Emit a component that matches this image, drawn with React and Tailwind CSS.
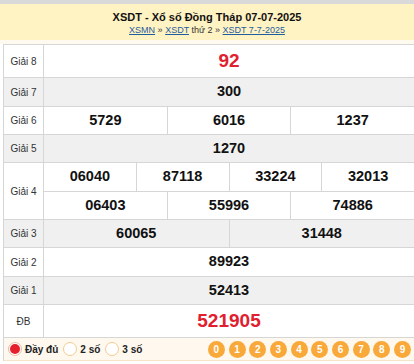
import React from 'react';

const rows = [
  { label: 'Giải 8', lines: [['92']], h: ['h-[33px]'], red: true, bg: 'bg-white' },
  { label: 'Giải 7', lines: [['300']], h: ['h-[29px]'], bg: 'bg-[#f0f0f0]' },
  { label: 'Giải 6', lines: [['5729', '6016', '1237']], h: ['h-[28px]'], bg: 'bg-white' },
  { label: 'Giải 5', lines: [['1270']], h: ['h-[28px]'], bg: 'bg-[#f0f0f0]' },
  {
    label: 'Giải 4',
    lines: [
      ['06040', '87118', '33224', '32013'],
      ['06403', '55996', '74886'],
    ],
    h: ['h-[29px]', 'h-[28px]'],
    bg: 'bg-white',
  },
  { label: 'Giải 3', lines: [['60065', '31448']], h: ['h-[28px]'], bg: 'bg-[#f0f0f0]' },
  { label: 'Giải 2', lines: [['89923']], h: ['h-[29px]'], bg: 'bg-white' },
  { label: 'Giải 1', lines: [['52413']], h: ['h-[28px]'], bg: 'bg-[#f0f0f0]' },
  { label: 'ĐB', lines: [['521905']], h: ['h-[33px]'], red: true, bg: 'bg-white' },
];

function Radio({ checked, text }) {
  return (
    <label className="flex items-center gap-[3px]">
      {checked ? (
        <span className="flex h-[14px] w-[14px] items-center justify-center rounded-full border border-[#f3b8a8] bg-white">
          <span className="h-[10px] w-[10px] rounded-full bg-[#e5202c]" />
        </span>
      ) : (
        <span className="h-[14px] w-[14px] rounded-full border border-[#f2cb8f] bg-white" />
      )}
      <span className="text-[10px] font-bold text-[#222]">{text}</span>
    </label>
  );
}

export default function App() {
  return (
    <div className="w-[414px] bg-white font-['Liberation_Sans',Arial,sans-serif]">
      {/* Header */}
      <div className="border-t-4 border-[#d9d9d9]">
        <div className="flex h-[36px] flex-col items-center bg-[#fff2c3] pt-[6px]">
          <h1 className="text-[11px] font-bold leading-[14px] text-[#111]">
            XSDT - Xổ số Đồng Tháp 07-07-2025
          </h1>
          <p className="text-[9px] leading-[12px] text-[#333]">
            <a className="text-[#1f5d9e] underline">XSMN</a> »{' '}
            <a className="text-[#1f5d9e] underline">XSDT</a> thứ 2 »{' '}
            <a className="text-[#1f5d9e] underline">XSDT 7-7-2025</a>
          </p>
        </div>
        <div className="h-[4px] bg-[#fffaf0]" />
      </div>

      {/* Results table */}
      <div className="ml-[3px] border-l border-t border-[#d6d6d6]">
        {rows.map((row) => (
          <div key={row.label} className={`flex ${row.bg}`}>
            <div className="flex w-[40px] items-center justify-center border-b border-r border-[#d6d6d6] text-[10px] text-[#333]">
              {row.label}
            </div>
            <div className="flex flex-1 flex-col">
              {row.lines.map((line, i) => (
                <div key={i} className={`flex border-b border-[#d6d6d6] ${row.h[i]}`}>
                  {line.map((n, j) => (
                    <div
                      key={n}
                      className={`flex flex-1 items-center justify-center font-bold ${
                        j > 0 ? 'border-l border-[#d6d6d6]' : ''
                      } ${row.red ? 'text-[19px] text-[#e0202e]' : 'text-[14.5px] text-[#111]'}`}
                    >
                      {n}
                    </div>
                  ))}
                </div>
              ))}
            </div>
          </div>
        ))}

        {/* Bottom bar */}
        <div className="flex h-[23px] items-center justify-between border-b border-[#f6e3c8] bg-[#fff8ee] pl-[4px] pr-[3px]">
          <div className="flex items-center gap-[5px]">
            <Radio checked text="Đầy đủ" />
            <Radio text="2 số" />
            <Radio text="3 số" />
          </div>
          <div className="flex gap-[3.7px]">
            {['0', '1', '2', '3', '4', '5', '6', '7', '8', '9'].map((d) => (
              <span
                key={d}
                className="flex h-[17px] w-[17px] items-center justify-center rounded-full bg-[#f8a93a] text-[10px] font-bold text-white"
              >
                {d}
              </span>
            ))}
          </div>
        </div>
      </div>
    </div>
  );
}
